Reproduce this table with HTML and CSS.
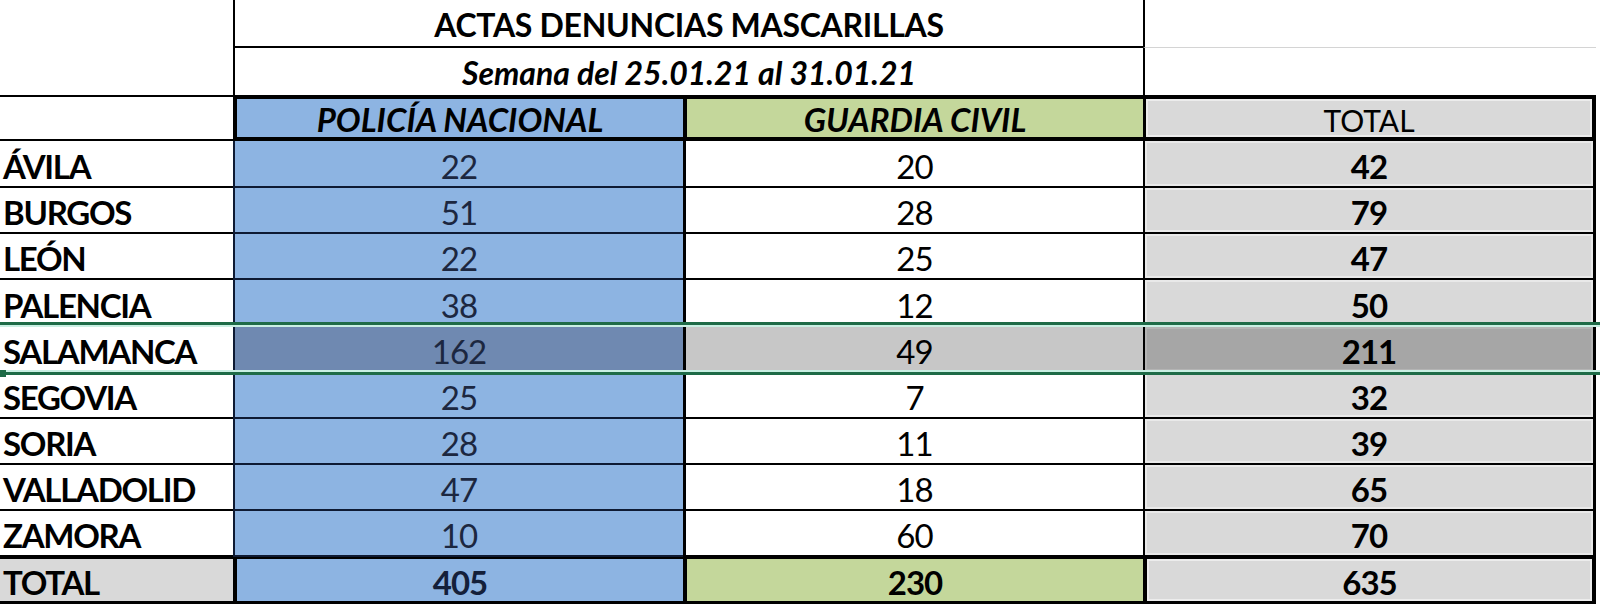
FILE: index.html
```html
<!DOCTYPE html>
<html lang="es">
<head>
<meta charset="utf-8">
<title>Actas denuncias mascarillas</title>
<link rel="stylesheet" href="styles.css">
</head>
<body>
<div class="sheet">
  <div class="blank"></div>
  <div class="title">ACTAS DENUNCIAS MASCARILLAS</div>
  <div class="top-right"></div>
  <div class="edge"></div>
  <div class="sub">Semana del 25.01.21 al 31.01.21</div>
  <div class="sub-right"></div>
  <div class="edge"></div>

  <div class="h1"></div>
  <div class="h2">POLICÍA NACIONAL</div>
  <div class="h3">GUARDIA CIVIL</div>
  <div class="h4">TOTAL</div>
  <div class="edge"></div>

  <div class="lab">ÁVILA</div><div class="pn">22</div><div class="gc">20</div><div class="tt">42</div><div class="edge"></div>
  <div class="lab">BURGOS</div><div class="pn">51</div><div class="gc">28</div><div class="tt">79</div><div class="edge"></div>
  <div class="lab">LEÓN</div><div class="pn">22</div><div class="gc">25</div><div class="tt">47</div><div class="edge"></div>
  <div class="lab">PALENCIA</div><div class="pn">38</div><div class="gc">12</div><div class="tt">50</div><div class="edge"></div>
  <div class="lab">SALAMANCA</div><div class="pn sel">162</div><div class="gc sel">49</div><div class="tt sel">211</div><div class="edge"></div>
  <div class="lab">SEGOVIA</div><div class="pn">25</div><div class="gc">7</div><div class="tt">32</div><div class="edge"></div>
  <div class="lab">SORIA</div><div class="pn">28</div><div class="gc">11</div><div class="tt">39</div><div class="edge"></div>
  <div class="lab">VALLADOLID</div><div class="pn">47</div><div class="gc">18</div><div class="tt">65</div><div class="edge"></div>
  <div class="lab">ZAMORA</div><div class="pn">10</div><div class="gc">60</div><div class="tt">70</div><div class="edge"></div>

  <div class="f1">TOTAL</div>
  <div class="f2">405</div>
  <div class="f3">230</div>
  <div class="f4">635</div>
  <div class="edge"></div>

  <div class="selection"></div>
  <div class="handle"></div>
</div>
</body>
</html>
```

FILE: styles.css
```css
* { box-sizing: border-box; }
html, body { margin: 0; padding: 0; background: #fff; }
body { width: 1600px; height: 604px; overflow: hidden; font-family: Lato, "Open Sans", sans-serif; color: #000; }

.sheet {
  position: relative;
  display: grid;
  grid-template-columns: 233px 450px 460px 453px 4px;
  grid-template-rows: 48px 47px 46px 47px 46px 46px 47px 46px 46px 46px 46px 46px 47px;
  width: 1600px;
  height: 604px;
}

.sheet > div {
  display: flex;
  align-items: center;
  justify-content: center;
  padding-top: 5px;
  font-size: 33px;
  line-height: 1;
  white-space: nowrap;
  letter-spacing: -1px;
}

.blank { grid-row: span 2; }
.sheet > .title {
  grid-column: 2 / span 2;
  border-left: 2px solid #000;
  border-bottom: 2px solid #000;
  font-weight: 700;
  font-size: 32px;
  letter-spacing: -0.3px;
  padding-top: 3px;
}
.top-right { border-left: 2px solid #000; border-bottom: 1px solid #d4d4d4; }
.sheet > .sub {
  grid-column: 2 / span 2;
  border-left: 2px solid #000;
  font-weight: 700;
  font-style: italic;
  font-size: 32px;
  letter-spacing: 0;
  padding-top: 3px;
}
.sub-right { border-left: 2px solid #000; }
.edge { background: #fff; }

.h1 { border-top: 2px solid #000; border-bottom: 2px solid #000; }
.sheet > .h2, .sheet > .h3, .sheet > .h4 {
  border-top: 4px solid #000;
  border-bottom: 4px solid #000;
  border-left: 4px solid #000;
  font-weight: 700;
  font-style: italic;
  letter-spacing: 0;
  padding-top: 3px;
}
.h2 { background: #8db4e2; }
.h3 { background: #c4d79b; }
.sheet > .h4 {
  background: #d9d9d9;
  border-left-width: 3px;
  border-right: 4px solid #000;
  font-weight: 400;
  font-style: normal;
  font-size: 30px;
  box-shadow: inset 0 0 0 2px #ececec;
}

.sheet > .lab {
  justify-content: flex-start;
  padding-left: 3px;
  font-weight: 700;
  letter-spacing: -1.3px;
  border-bottom: 2px solid #000;
}
.pn {
  background: #8db4e2;
  color: #1c2740;
  border-left: 2px solid #0e1a33;
  border-bottom: 2px solid #0e1a33;
}
.gc {
  border-left: 3px solid #000;
  border-bottom: 2px solid #000;
}
.tt {
  background: #d9d9d9;
  font-weight: 700;
  border-left: 2px solid #000;
  border-right: 3px solid #000;
  border-bottom: 2px solid #000;
  box-shadow: inset 0 0 0 2px #e9e9e9;
}
.pn.sel { background: #6f89b1; }
.gc.sel { background: #c7c7c7; }
.tt.sel { background: #a6a6a6; box-shadow: inset 0 0 0 2px #b4b4b4; }

.f1, .f2, .f3, .f4 {
  border-top: 2px solid #000;
  border-bottom: 3px solid #000;
  font-weight: 700;
}
.sheet > .f1 {
  background: #d9d9d9;
  justify-content: flex-start;
  padding-left: 3px;
  letter-spacing: -1.3px;
}
.f2 { background: #8db4e2; border-left: 4px solid #000; color: #14203a; }
.f3 { background: #c4d79b; border-left: 4px solid #000; }
.f4 {
  background: #d9d9d9;
  border-left: 4px solid #000;
  border-right: 4px solid #000;
  box-shadow: inset 0 0 0 2px #ececec;
}

.sheet > .selection {
  position: absolute;
  left: 0;
  top: 322px;
  width: 1600px;
  height: 53px;
  border-top: 3px solid #1e6b47;
  border-bottom: 3px solid #1e6b47;
  box-shadow: inset 0 2px 0 #c9efe3, inset 0 -2px 0 #c9efe3;
  pointer-events: none;
  padding: 0;
}
.sheet > .handle {
  position: absolute;
  left: 0;
  top: 370px;
  width: 6px;
  height: 7px;
  background: #1e6b47;
  padding: 0;
}
```
